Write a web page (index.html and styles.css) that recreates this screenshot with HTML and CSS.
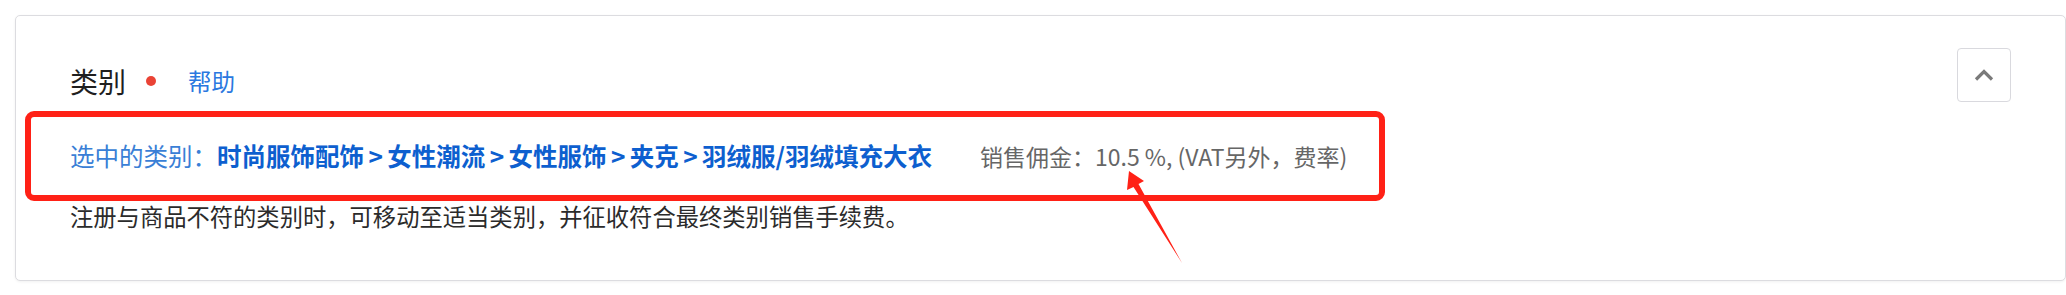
FILE: index.html
```html
<!DOCTYPE html>
<html lang="zh-CN">
<head>
<meta charset="utf-8">
<title>类别</title>
<link rel="stylesheet" href="styles.css">
</head>
<body>
<section class="card">
  <div class="head">
    <div class="title-group">
      <h2 class="title">类别</h2>
      <span class="dot"></span>
      <a class="help" href="#">帮助</a>
    </div>
    <button class="toggle" type="button" aria-label="收起">
      <svg width="20" height="14" viewBox="0 0 20 14"><polyline points="2,11.5 10,3.5 18,11.5" fill="none" stroke="#7a7a7a" stroke-width="3.2"/></svg>
    </button>
  </div>
  <div class="selected">
    <span class="label">选中的类别：</span><span class="path">时尚服饰配饰<span class="sep">&gt;</span>女性潮流<span class="sep">&gt;</span>女性服饰<span class="sep">&gt;</span>夹克<span class="sep">&gt;</span>羽绒服/羽绒填充大衣</span>
    <span class="fee">销售佣金：10.5 %, (VAT另外，费率)</span>
  </div>
  <p class="desc">注册与商品不符的类别时，可移动至适当类别，并征收符合最终类别销售手续费。</p>
</section>
<div class="mark-box"></div>
<svg class="mark-arrow" width="2066" height="295" viewBox="0 0 2066 295">
  <polygon points="1129,171 1144,181 1138.5,184 1182,263 1133.5,187 1127,190" fill="#ff2116"/>
</svg>
</body>
</html>
```
FILE: styles.css
```css
html, body {
  margin: 0;
  padding: 0;
  background: #ffffff;
}
body {
  position: relative;
  width: 2066px;
  height: 295px;
  overflow: hidden;
  font-family: "Noto Sans CJK SC", "Noto Sans", sans-serif;
  color: #333;
}
.card {
  box-sizing: border-box;
  margin: 15px 0 0 15px;
  width: 2051px;
  height: 266px;
  border: 1px solid #dcdce0;
  border-radius: 5px;
  box-shadow: 0 1px 3px rgba(0, 0, 0, 0.06);
  padding: 32px 54px 44px 54px;
  background: #fff;
}
.head {
  display: flex;
  justify-content: space-between;
  align-items: flex-start;
  height: 54px;
}
.title-group {
  display: flex;
  align-items: center;
  height: 28px;
  margin-top: 19px;
}
.title {
  margin: 0;
  font-size: 28px;
  line-height: 28px;
  font-weight: 400;
  color: #1f1f1f;
}
.dot {
  width: 10px;
  height: 10px;
  border-radius: 50%;
  background: #ea4335;
  margin-left: 20px;
}
.help {
  margin-left: 32px;
  font-size: 23.5px;
  line-height: 28px;
  color: #2a78e0;
  text-decoration: none;
}
.toggle {
  box-sizing: border-box;
  width: 54px;
  height: 54px;
  border: 1px solid #d9d9de;
  border-radius: 4px;
  background: #fff;
  padding: 0;
  display: flex;
  align-items: center;
  justify-content: center;
}
.selected {
  display: flex;
  align-items: baseline;
  margin-top: 34px;
  height: 40px;
  line-height: 40px;
  white-space: nowrap;
}
.label {
  font-size: 24.5px;
  color: #3a7fd6;
}
.path {
  font-size: 24.5px;
  font-weight: 700;
  color: #0d5fcf;
}
.sep {
  padding: 0 4.4px;
}
.fee {
  margin-left: 48px;
  font-size: 23px;
  color: #666;
}
.desc {
  margin: 20px 0 0 0;
  font-size: 23.3px;
  line-height: 40px;
  color: #2b2b2b;
  white-space: nowrap;
}
.mark-box {
  position: absolute;
  left: 25px;
  top: 111px;
  width: 1360px;
  height: 90px;
  box-sizing: border-box;
  border: 6px solid #ff2116;
  border-radius: 9px;
}
.mark-arrow {
  position: absolute;
  left: 0;
  top: 0;
  pointer-events: none;
}
```
